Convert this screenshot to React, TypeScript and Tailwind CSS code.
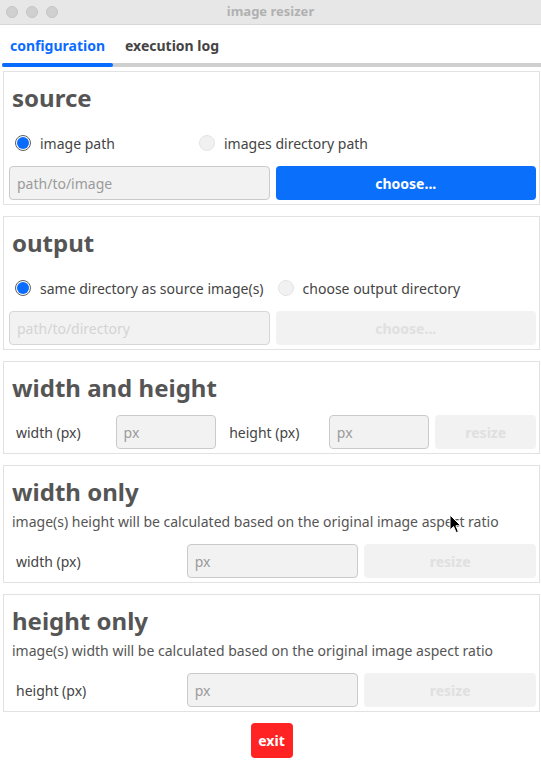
import React from "react";

function Radio({ checked }: { checked: boolean }) {
  if (checked) {
    return (
      <span className="flex h-[16px] w-[16px] shrink-0 items-center justify-center rounded-full border border-[#5e5e5e] bg-white">
        <span className="h-[12px] w-[12px] rounded-full bg-[#0a6cff]" />
      </span>
    );
  }
  return <span className="h-[16px] w-[16px] shrink-0 rounded-full border border-[#e4e4e4] bg-[#f1f1f1]" />;
}

function Heading({ children }: { children: React.ReactNode }) {
  return <div className="pl-[3px] text-[24px] font-bold leading-[32px] text-[#555555]">{children}</div>;
}

function Input({ placeholder, disabled }: { placeholder: string; disabled?: boolean }) {
  return (
    <div
      className={
        disabled
          ? "flex h-[34px] items-center rounded-[4px] border border-[#d6d6d6] bg-[#f2f2f2] pl-[7px] text-[14px] text-[#d4d4d4]"
          : "flex h-[34px] items-center rounded-[4px] border border-[#cacaca] bg-[#f2f2f2] pl-[7px] text-[14px] text-[#9b9b9b]"
      }
    >
      {placeholder}
    </div>
  );
}

function Button({ label, primary }: { label: string; primary?: boolean }) {
  return (
    <div
      className={
        primary
          ? "flex h-[34px] items-center justify-center rounded-[4px] bg-[#0a6ffb] text-[14px] font-bold text-white"
          : "flex h-[34px] items-center justify-center rounded-[4px] bg-[#f2f2f2] text-[14px] font-bold text-[#e0e0e0]"
      }
    >
      {label}
    </div>
  );
}

function Label({ children }: { children: React.ReactNode }) {
  return <div className="flex h-[34px] items-center pl-[7px] text-[14px] text-[#444444]">{children}</div>;
}

function Panel({ children }: { children: React.ReactNode }) {
  return <div className="border border-[#e2e2e2] pb-[4px] pl-[5px] pr-[3px] pt-[10px]">{children}</div>;
}

export default function App() {
  return (
    <div className="relative h-[763px] w-[541px] overflow-hidden bg-white font-['Noto_Sans','Open_Sans',sans-serif]">
      {/* title bar */}
      <div className="grid h-[25px] grid-cols-[1fr_auto_1fr] items-center border-b border-[#d8d8d8] bg-[#e7e7e7]">
        <div className="flex gap-[8px] pl-[6px]">
          <span className="h-[12px] w-[12px] rounded-full border border-[#c4c4c4] bg-[#d0d0d0]" />
          <span className="h-[12px] w-[12px] rounded-full border border-[#c4c4c4] bg-[#d0d0d0]" />
          <span className="h-[12px] w-[12px] rounded-full border border-[#c4c4c4] bg-[#d0d0d0]" />
        </div>
        <div className="text-[13px] font-bold text-[#b1b1b1]">image resizer</div>
        <div />
      </div>

      {/* tabs */}
      <div className="flex h-[38px] items-center pl-[2px] pt-[2px] text-[14px] font-bold">
        <div className="w-[111px] text-center text-[#0a6cff]">configuration</div>
        <div className="pl-[12px] text-[#444444]">execution log</div>
      </div>
      <div className="ml-[2px] flex h-[4px] bg-[#cfcfcf]">
        <div className="h-[4px] w-[111px] rounded-full bg-[#0a6cff]" />
      </div>

      <div className="flex flex-col gap-[11px] pl-[3px] pr-[1px] pt-[4px]">
        {/* source */}
        <Panel>
          <Heading>source</Heading>
          <div className="mt-[19px] flex h-[20px] items-center pl-[6px] text-[14px] text-[#444444]">
            <div className="flex w-[184px] items-center gap-[9px]">
              <Radio checked />
              <span>image path</span>
            </div>
            <div className="flex items-center gap-[9px]">
              <Radio checked={false} />
              <span>images directory path</span>
            </div>
          </div>
          <div className="mt-[13px] grid grid-cols-2 gap-[6px]">
            <Input placeholder="path/to/image" />
            <Button label="choose..." primary />
          </div>
        </Panel>

        {/* output */}
        <Panel>
          <Heading>output</Heading>
          <div className="mt-[19px] flex h-[20px] items-center gap-[14px] pl-[6px] text-[14px] text-[#444444]">
            <div className="flex items-center gap-[9px]">
              <Radio checked />
              <span>same directory as source image(s)</span>
            </div>
            <div className="flex items-center gap-[9px]">
              <Radio checked={false} />
              <span>choose output directory</span>
            </div>
          </div>
          <div className="mt-[13px] grid grid-cols-2 gap-[6px]">
            <Input placeholder="path/to/directory" disabled />
            <Button label="choose..." />
          </div>
        </Panel>

        {/* width and height */}
        <Panel>
          <Heading>width and height</Heading>
          <div className="mt-[11px] grid grid-cols-5 gap-[6px]">
            <Label>width (px)</Label>
            <Input placeholder="px" />
            <Label>height (px)</Label>
            <Input placeholder="px" />
            <Button label="resize" />
          </div>
        </Panel>

        {/* width only */}
        <Panel>
          <Heading>width only</Heading>
          <div className="mt-[3px] pl-[3px] text-[14px] leading-[21px] text-[#555555]">
            image(s) height will be calculated based on the original image aspect ratio
          </div>
          <div className="mt-[12px] grid grid-cols-3 gap-[6px]">
            <Label>width (px)</Label>
            <Input placeholder="px" />
            <Button label="resize" />
          </div>
        </Panel>

        {/* height only */}
        <Panel>
          <Heading>height only</Heading>
          <div className="mt-[3px] pl-[3px] text-[14px] leading-[21px] text-[#555555]">
            image(s) width will be calculated based on the original image aspect ratio
          </div>
          <div className="mt-[12px] grid grid-cols-3 gap-[6px]">
            <Label>height (px)</Label>
            <Input placeholder="px" />
            <Button label="resize" />
          </div>
        </Panel>
      </div>

      <div className="mt-[11px] flex justify-center pl-[2px]">
        <div className="flex h-[35px] w-[42px] items-center justify-center rounded-[4px] bg-[#ff2323] text-[14px] font-bold text-white">
          exit
        </div>
      </div>

      {/* mouse cursor */}
      <svg className="absolute left-[449px] top-[514px]" width="13" height="20" viewBox="0 0 13 20">
        <path d="M1 1 L1 16 L4.6 12.6 L7.2 18.6 L9.4 17.6 L6.9 11.8 L11.8 11.8 Z" fill="#000" stroke="#fff" strokeWidth="1" strokeLinejoin="round" />
      </svg>
    </div>
  );
}
